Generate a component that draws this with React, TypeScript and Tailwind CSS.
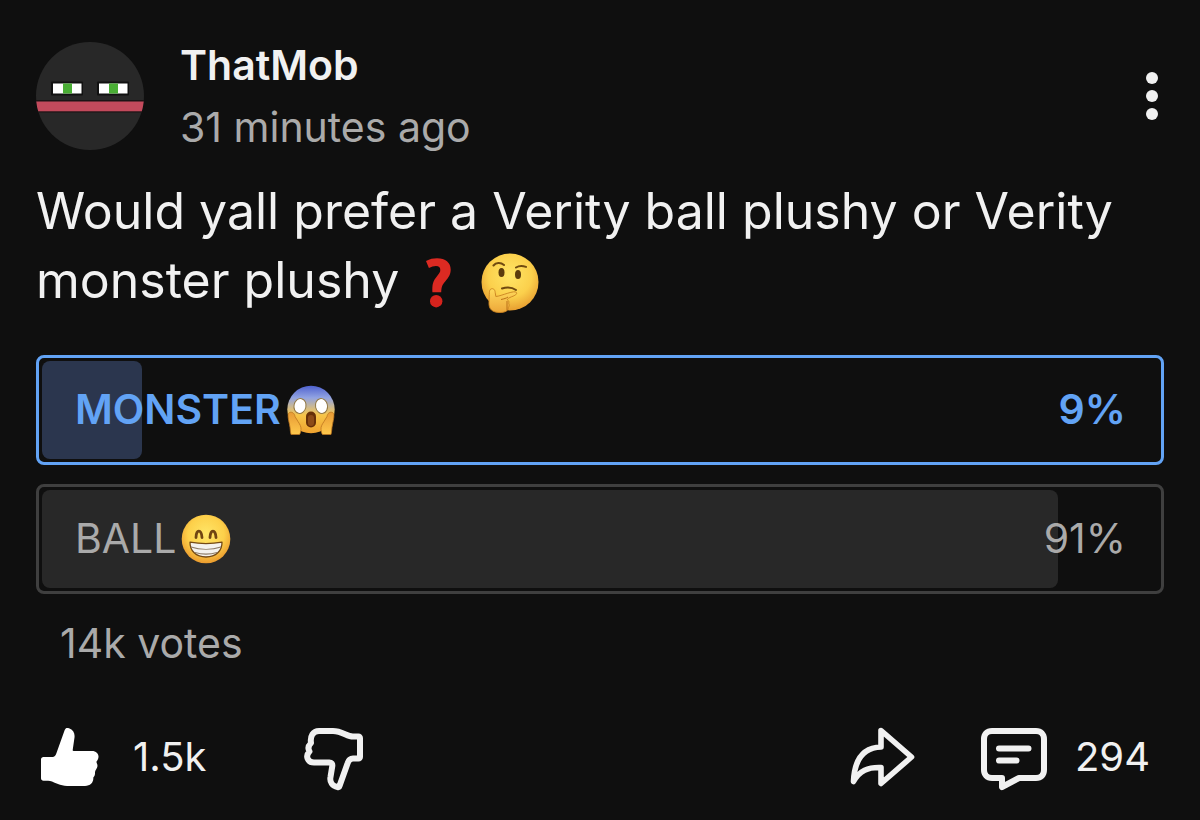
import { useState } from "react";

function Avatar() {
  return (
    <svg viewBox="0 0 108 108" className="size-[108px] shrink-0" role="img" aria-label="ThatMob avatar">
      <defs>
        <clipPath id="avatar-clip">
          <circle cx="54" cy="54" r="54" />
        </clipPath>
      </defs>
      <g clipPath="url(#avatar-clip)">
        <rect width="108" height="108" fill="#282828" />
        <rect x="0" y="58" width="108" height="12.500" fill="#1c1315" />
        <rect x="0" y="59.500" width="108" height="9.800" fill="#c34a5c" />
        <rect x="15" y="39.500" width="32" height="14" rx="1" fill="#111" />
        <rect x="17" y="41.500" width="28.500" height="10" fill="#fff" />
        <rect x="27" y="41.500" width="9" height="10" fill="#4aae35" />
        <rect x="61" y="39.500" width="32" height="14" rx="1" fill="#111" />
        <rect x="63" y="41.500" width="28.500" height="10" fill="#fff" />
        <rect x="73" y="41.500" width="9" height="10" fill="#4aae35" />
      </g>
    </svg>
  );
}

function QuestionMark() {
  return (
    <svg viewBox="0 0 26 50" className="h-[50px] w-[26px]" role="img" aria-label="❓">
      <path
        d="M1 3C5 1 8 .3 12 .3c8.500 0 13.700 4.300 13.700 11.200 0 5-2.200 8.200-5.500 12-3.200 3.500-3.700 5.500-4 10.700H7.400c-.4-8 .7-11.500 4.600-16 2.300-2.700 3.300-4.200 3.300-6.200 0-2.600-1.300-4-4.400-4-2.200 0-4.500.7-7 2L1 3z"
        fill="#dc2a22"
      />
      <circle cx="11.200" cy="43.200" r="6.200" fill="#d5231d" />
    </svg>
  );
}

function ThinkingFace() {
  return (
    <svg viewBox="0 0 58 60" className="h-[60px] w-[58px]" role="img" aria-label="🤔">
      <defs>
        <radialGradient id="think-face" cx=".5" cy=".38" r=".64">
          <stop offset="0" stopColor="#ffe566" />
          <stop offset=".6" stopColor="#fbd04c" />
          <stop offset="1" stopColor="#e69a2e" />
        </radialGradient>
        <linearGradient id="think-hand" x1="0" y1="0" x2="0" y2="1">
          <stop offset="0" stopColor="#ffda5c" />
          <stop offset="1" stopColor="#eda73a" />
        </linearGradient>
      </defs>
      <circle cx="29" cy="29" r="28.500" fill="url(#think-face)" />
      <ellipse cx="20.500" cy="19.500" rx="3" ry="4.500" fill="#5b3b0c" />
      <ellipse cx="37" cy="21.500" rx="3" ry="4.500" fill="#5b3b0c" />
      <g fill="none" stroke="#704a10" strokeWidth="2" strokeLinecap="round">
        <path d="M12.500 12.500c2.500-3 7-3.500 10.500-.5M35 14.500c3-1.800 7-1.600 10-.6M21 35.500c5-1.500 10-1.200 14 1.500" />
      </g>
      <path
        d="M10 36c2-1 4 .4 4.200 3.500l.6 4c3-.2 7-1.800 12-3.300 4.500-1.300 7.500-2 8.500-.8 1.200 1.600-1 3-4.500 4.300-2.500 1-4.500 2-4.500 3 1.500 1 1.800 2 1.400 3.600.8 1.500.6 3-.4 4.200.2 3-3 5-8.300 5C11.500 59.500 7.500 56.500 8 49c.2-4 .2-6.500.4-9.500.1-1.900.5-3 1.600-3.500z"
        fill="url(#think-hand)"
        stroke="#c98220"
        strokeWidth=".9"
      />
      <path d="M20 46.500c3-.6 5.500-1.300 7-2.500M26 48v9" fill="none" stroke="#ba7118" strokeWidth="1" />
    </svg>
  );
}

function ScreamFace() {
  return (
    <svg viewBox="0 0 50 50" className="h-[50px] w-[50px] shrink-0" role="img" aria-label="😱">
      <defs>
        <linearGradient id="scream-face" x1="0" y1="0" x2="0" y2="1">
          <stop offset="0" stopColor="#4f62cf" />
          <stop offset=".25" stopColor="#91a3e2" />
          <stop offset=".48" stopColor="#d6bd83" />
          <stop offset=".62" stopColor="#f7c548" />
          <stop offset="1" stopColor="#efa22f" />
        </linearGradient>
        <linearGradient id="scream-hand" x1="0" y1="0" x2="0" y2="1">
          <stop offset="0" stopColor="#e79a35" />
          <stop offset="1" stopColor="#ffc94c" />
        </linearGradient>
      </defs>
      <circle cx="25" cy="24.500" r="23.700" fill="url(#scream-face)" />
      <g fill="#fff" stroke="#927844" strokeWidth="1">
        <ellipse cx="14" cy="21" rx="6" ry="7.500" transform="rotate(12 14 21)" />
        <ellipse cx="35.500" cy="21" rx="6" ry="7.500" transform="rotate(-12 35.500 21)" />
      </g>
      <rect x="20" y="26.500" width="10" height="16" rx="5" fill="#673008" />
      <rect x="22" y="30" width="6" height="11" rx="3" fill="#8c4b18" />
      <g fill="url(#scream-hand)" stroke="#bd7520" strokeWidth=".8">
        <path d="M3.500 27.500c3-1 5 1 5.500 4l3 5c2 3 3.200 5 3 8-.2 2.500-.8 4-1.500 5H5c-1-4-.5-6-1.500-10-1-5-2.500-10.500 0-12z" />
        <path d="M46.500 27.500c-3-1-5 1-5.500 4l-3 5c-2 3-3.200 5-3 8 .2 2.500.8 4 1.500 5H45c1-4 .5-6 1.500-10 1-5 2.500-10.500 0-12z" />
      </g>
    </svg>
  );
}

function BeamingFace() {
  return (
    <svg viewBox="0 0 50 50" className="h-[50px] w-[50px] shrink-0" role="img" aria-label="😁">
      <defs>
        <radialGradient id="beam-face" cx=".5" cy=".4" r=".62">
          <stop offset="0" stopColor="#ffe668" />
          <stop offset=".6" stopColor="#fdd04a" />
          <stop offset="1" stopColor="#e9962b" />
        </radialGradient>
      </defs>
      <circle cx="25" cy="25" r="24.300" fill="url(#beam-face)" />
      <path d="M15 23.500c.2-8.500 5.300-8.500 6 0M29 23.500c.4-8.500 5.500-8.500 6 0" fill="none" stroke="#704512" strokeWidth="2.800" strokeLinecap="round" />
      <path d="M9 28.200c10 1.800 22 1.800 32 0 .2 8.500-6 14.800-16 14.800S8.800 36.700 9 28.200z" fill="#f4f2ee" stroke="#744a16" strokeWidth="1.300" strokeLinejoin="round" />
      <path d="M10 33c9 3 21 3 30 0M14 38.500c7 2 15 2 22 0" fill="none" stroke="#8d7c68" strokeWidth="1.200" />
    </svg>
  );
}

function ThumbUp() {
  return (
    <svg viewBox="0 0 58 60" className="h-[60px] w-[58px]" aria-hidden="true">
      <path
        d="M2.500 30H11.500C13.500 30 14.500 28.500 15.300 26.500L23.700 3C24.500.8 26 .5 28 1.300c4.200 1.500 6 4.700 5.500 9.200L31.700 23c-.1.600.2 1 1 1H51c6 0 8.600 5.500 4.600 10.500-.7 1 .9 2 .9 4.500 0 2.200-2.700 4.500-2.500 6.500.2 1.300-.2 3.500-1.700 5 .4 5-2.800 8.500-8.300 8.500H29c-8 0-12.500-2-18-4.500-1.300-.5-2.500-.7-4-.7H2.500c-1.500 0-2.500-1-2.500-2.500v-19C0 31 1 30 2.500 30z"
        fill="#fff"
      />
    </svg>
  );
}

function ThumbDown() {
  return (
    <svg viewBox="0 0 60 64" className="h-[64px] w-[60px]" aria-hidden="true">
      <path
        d="M15 4H29C38 4 43 9.500 49 9.500h5.500c.7 0 1.500.7 1.500 1.500v19c0 .7-.8 1.500-1.500 1.500H49c-3 0-4.500 2-5.300 4.500L35.500 59c-.3 1-.8 1.300-2 1-5-1-8-5-7-10l1.800-11c.3-2-.8-3.500-3-3.500H10C3.500 35.500 1 29 5.500 24.500 3 20.500 5 18 7 16 6 9 9 4 15 4z"
        fill="none"
        stroke="#f1f1f1"
        strokeWidth="6"
        strokeLinejoin="round"
      />
    </svg>
  );
}

function ShareArrow() {
  return (
    <svg viewBox="0 0 66 60" className="h-[60px] w-[66px]" aria-hidden="true">
      <path
        d="M31 3.500L61.500 30 31 56.500V40.500C18 40 9.500 43.500 3.500 54.500 4.500 32 14 20.500 31 20V3.500z"
        fill="none"
        stroke="#f1f1f1"
        strokeWidth="5.600"
        strokeLinejoin="round"
      />
    </svg>
  );
}

function CommentBubble() {
  return (
    <svg viewBox="0 0 66 64" className="h-[64px] w-[66px]" aria-hidden="true">
      <g fill="none" stroke="#f1f1f1" strokeWidth="6" strokeLinejoin="round" strokeLinecap="round">
        <path d="M11 4H55c5 0 8 3.500 8 8V43c0 5-3 8-8 8H38L21 60V51H11c-5 0-8-3.500-8-8V12c0-5 3-8 8-8z" />
        <path d="M18 21.500H47.500M18 33.500H35.500" />
      </g>
    </svg>
  );
}

const options = [
  { label: "MONSTER", percent: 9, Face: ScreamFace },
  { label: "BALL", percent: 91, Face: BeamingFace },
];

export default function App() {
  const [chosen, setChosen] = useState(0);

  return (
    <main className="min-h-screen bg-[#0f0f0f] px-9 pt-[34px] font-['Inter',sans-serif] text-[#f1f1f1]">
      <article>
        <header className="flex items-center">
          <Avatar />
          <div className="ml-9 grow text-[41px] leading-[62px]">
            <h1 className="font-semibold">ThatMob</h1>
            <p className="text-[#aaaaaa]">31 minutes ago</p>
          </div>
          <button type="button" aria-label="More options" className="flex w-6 flex-col items-center gap-[6px]">
            <span className="size-3 rounded-full bg-[#f1f1f1]" />
            <span className="size-3 rounded-full bg-[#f1f1f1]" />
            <span className="size-3 rounded-full bg-[#f1f1f1]" />
          </button>
        </header>

        <p className="mt-[19px] text-[50px] leading-[69px]">
          Would yall prefer a Verity ball plushy or Verity monster plushy{" "}
          <span className="ml-3 inline-flex h-[60px] items-center gap-[30px] align-[-10px]">
            <QuestionMark />
            <ThinkingFace />
          </span>
        </p>

        <div className="mt-10 flex flex-col gap-[19px]">
          {options.map(({ label, percent, Face }, index) => {
            const active = index === chosen;
            return (
              <button
                key={label}
                type="button"
                aria-pressed={active}
                onClick={() => setChosen(index)}
                className={`relative h-[110px] rounded-lg border-3 text-[41px] ${
                  active ? "border-[#62a3f5] font-semibold text-[#62a3f5]" : "border-[#3f3f3f] text-[#aaaaaa]"
                }`}
              >
                <span className="absolute inset-[3px]">
                  <span
                    className={`block h-full rounded-lg ${active ? "bg-[#2b364e]" : "bg-[#282828]"}`}
                    style={{ width: `${percent}%` }}
                  />
                </span>
                <span className="relative flex items-center justify-between pr-[35px] pl-9">
                  <span className="flex items-center gap-[5px]">
                    {label}
                    <Face />
                  </span>
                  <span>{percent}%</span>
                </span>
              </button>
            );
          })}
        </div>

        <p className="mt-[19px] ml-6 text-[41px] leading-[60px] text-[#aaaaaa]">14k votes</p>

        <footer className="mt-[54px] flex items-start pr-[14px] pl-[5px] text-[40px] leading-[60px]">
          <button type="button" aria-label="Like, 1.5k likes" className="flex items-start gap-[34px]">
            <ThumbUp />
            <span>1.5k</span>
          </button>
          <button type="button" aria-label="Dislike" className="ml-[97px]">
            <ThumbDown />
          </button>
          <button type="button" aria-label="Share" className="ml-auto">
            <ShareArrow />
          </button>
          <button type="button" aria-label="294 comments" className="ml-[65px] flex items-start gap-7">
            <CommentBubble />
            <span>294</span>
          </button>
        </footer>
      </article>
    </main>
  );
}
